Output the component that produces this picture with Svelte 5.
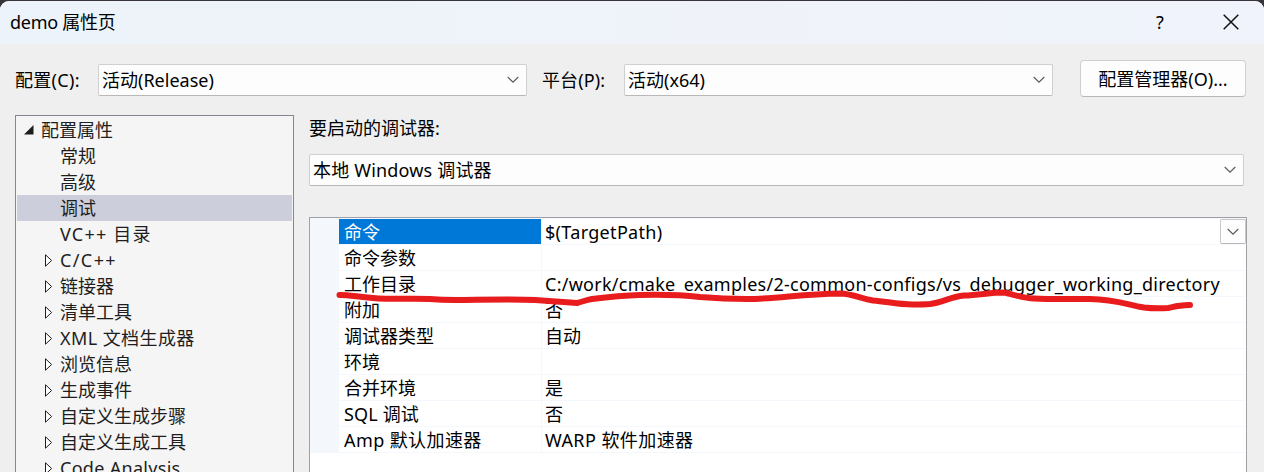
<script>
  const tree = [
    { text: '常规' },
    { text: '高级' },
    { text: '调试', selected: true },
    { text: 'VC++ 目录', spacing: 1.2 },
    { text: 'C/C++', branch: true, spacing: 1.4 },
    { text: '链接器', branch: true },
    { text: '清单工具', branch: true },
    { text: 'XML 文档生成器', branch: true, spacing: 0.42 },
    { text: '浏览信息', branch: true },
    { text: '生成事件', branch: true },
    { text: '自定义生成步骤', branch: true },
    { text: '自定义生成工具', branch: true },
    { text: 'Code Analysis', branch: true, spacing: 0.3 }
  ];
  const props = [
    ['命令', '$(TargetPath)', 0, 0.32],
    ['命令参数', '', 0, 0],
    ['工作目录', 'C:/work/cmake_examples/2-common-configs/vs_debugger_working_directory', 0, 0.262],
    ['附加', '否', 0, 0],
    ['调试器类型', '自动', 0, 0],
    ['环境', '', 0, 0],
    ['合并环境', '是', 0, 0],
    ['SQL 调试', '否', 0.15, 0],
    ['Amp 默认加速器', 'WARP 软件加速器', 0.4, 0.42]
  ];
</script>

{#snippet chevron()}
  <svg class="chevron" width="12" height="8" viewBox="0 0 12 8"><path d="M.7 1 6 6.2 11.300 1" /></svg>
{/snippet}

<div class="backdrop">
  <div class="window">
    <header>
      <span class="title">demo 属性页</span>
      <span class="help">?</span>
      <svg class="close" width="16" height="16" viewBox="0 0 16 16"><path d="M.7.7 15.300 15.300M15.300.7.7 15.300" /></svg>
    </header>

    <div class="toolbar">
      <span class="config-label">配置(C):</span>
      <div class="combo"><span>活动(Release)</span>{@render chevron()}</div>
      <span class="platform-label">平台(P):</span>
      <div class="combo"><span>活动(x64)</span>{@render chevron()}</div>
      <button>配置管理器(O)...</button>
    </div>

    <main>
      <nav>
        <div class="node root">
          <svg width="10" height="10" viewBox="0 0 10 10"><path d="M9.500 0V9.500H0Z" fill="#1e1e1e" /></svg>
          <span>配置属性</span>
        </div>
        {#each tree as n}
          <div class="node" class:selected={n.selected}>
            <span class="slot">
              {#if n.branch}
                <svg width="8" height="13" viewBox="0 0 8 13"><path d="M.5.8V12.200L6.600 6.500Z" fill="#fff" stroke="#1e1e1e" /></svg>
              {/if}
            </span>
            <span style:letter-spacing="{n.spacing ?? 0}px">{n.text}</span>
          </div>
        {/each}
      </nav>

      <section>
        <div class="launch">要启动的调试器:</div>
        <div class="combo wide"><span>本地 Windows 调试器</span>{@render chevron()}</div>
        <div class="grid">
          {#each props as [name, value, nameSpacing, valueSpacing], i}
            <div class="row" class:active={i === 0}>
              <div class="name" style:letter-spacing="{nameSpacing}px">{name}</div>
              <div class="value"><span style:letter-spacing="{valueSpacing}px">{value}</span></div>
              {#if i === 0}<div class="drop">{@render chevron()}</div>{/if}
            </div>
          {/each}
        </div>
      </section>
    </main>
  </div>
  <svg class="ink" width="1264" height="472" viewBox="0 0 1264 472">
    <path d="M339.500 295C350 295 358 297 373 298C390 299.500 410 298.500 430 299C445 300.500 455 300 463 300C490 299.500 515 299 535 300C550 301 563 302 577 303C583 301.500 586 300 592 299C608 297 622 295.500 640 295C662 294.500 682 295 700 297C718 298.500 730 299 747 299C778 299 800 294 840 293.500C853 294 860 298 873 300.500C887 301.500 897 304.500 913 304.500C920 304.500 924 304.500 930 304C942 302.500 950 297 964 295.500C980 295 990 292.500 1004 292.500C1012 294 1022 298 1034 298.500C1052 299.500 1072 299 1090 299C1115 299.500 1125 304 1144 307.500C1152 308.500 1160 308.500 1168 308C1174 307 1175 305.500 1190 305" />
  </svg>
</div>

<style>
  :global(body) { margin: 0; overflow: hidden; }
  .backdrop {
    position: relative; width: 1264px; height: 472px; overflow: hidden;
    box-sizing: border-box; padding-top: 1px; background: #38353a;
    font: 18px/26px "Noto Sans", "Noto Sans CJK SC", sans-serif; color: #000;
  }
  .backdrop * { box-sizing: border-box; }
  span, .name, .launch, button { white-space: pre; }
  .window { height: 471px; background: #efefef; border-radius: 9px 9px 0 0; overflow: hidden; }
  header {
    height: 43px; display: flex; align-items: center; padding: 0 25px 2px 10px;
    background: linear-gradient(90deg, #edf3fa, #eff3f9 60%, #f0f3fb);
  }
  .title { flex: 1; letter-spacing: -0.25px; }
  .help { width: 10px; margin-right: 57px; }
  .close { fill: none; stroke: #111; stroke-width: 1.5; }
  .toolbar { height: 71px; display: flex; align-items: flex-start; padding: 16px 18px 0 15px; }
  .config-label { width: 83px; margin-top: 7px; letter-spacing: 0.3px; }
  .platform-label { width: 82px; margin: 7px 0 0 15px; letter-spacing: 0.1px; }
  .combo {
    width: 429px; height: 32px; margin-top: 4px; display: flex; align-items: center;
    justify-content: space-between; padding: 0 7px 0 3px; background: #fdfdfd;
    border: 1px solid #d0d0d0; border-bottom-color: #b8b8b8; border-radius: 2px;
  }
  .chevron { fill: none; stroke: #5c5c5c; stroke-width: 1.2; flex: none; }
  button {
    width: 166px; height: 37px; margin-left: auto; padding: 0; font: inherit; color: #000;
    background: #fdfdfd; border: 1px solid #d0d0d0; border-bottom-color: #b8b8b8; border-radius: 4px;
  }
  main { display: flex; height: 357px; }
  nav {
    width: 279px; height: 380px; margin-left: 15px; flex: none; padding: 1px;
    background: #f5f5f5; border: 1px solid #828790; color: #1e1e1e;
  }
  .node { height: 26px; display: flex; align-items: center; }
  .root svg { margin: 0 7px 0 7px; }
  .slot { width: 43px; height: 13px; padding-left: 28px; display: flex; flex: none; }
  .selected { background: #cccedb; }
  section { margin-left: 15px; width: 938px; }
  .launch { height: 39px; }
  .combo.wide { width: 935px; margin-top: 0; letter-spacing: 0.18px; }
  .grid { margin-top: 31px; height: 300px; background: #fff; border: 1px solid #a0a0a5; }
  .row { position: relative; height: 26px; display: flex; background: #f4f7fc; padding: 0 0 1px 29px; }
  .row:first-child { height: 27px; padding-top: 1px; }
  .name { width: 202px; padding-left: 5px; background: #fff; height: 25px; }
  .active .name { background: #0078d7; color: #fff; }
  .value { flex: 1; margin-left: 1px; padding-left: 3px; background: #fff; height: 25px; }
  .drop {
    position: absolute; right: 0; top: 1px; width: 26px; height: 25px; background: #fdfdfd;
    border: 1px solid #c8c8c8; border-bottom-color: #b8b8b8; border-radius: 2px;
    display: flex; align-items: center; justify-content: center;
  }
  .ink { position: absolute; left: 0; top: 0; pointer-events: none; }
  .ink path { fill: none; stroke: #e81c1c; stroke-width: 6; stroke-linecap: round; stroke-linejoin: round; }
</style>
